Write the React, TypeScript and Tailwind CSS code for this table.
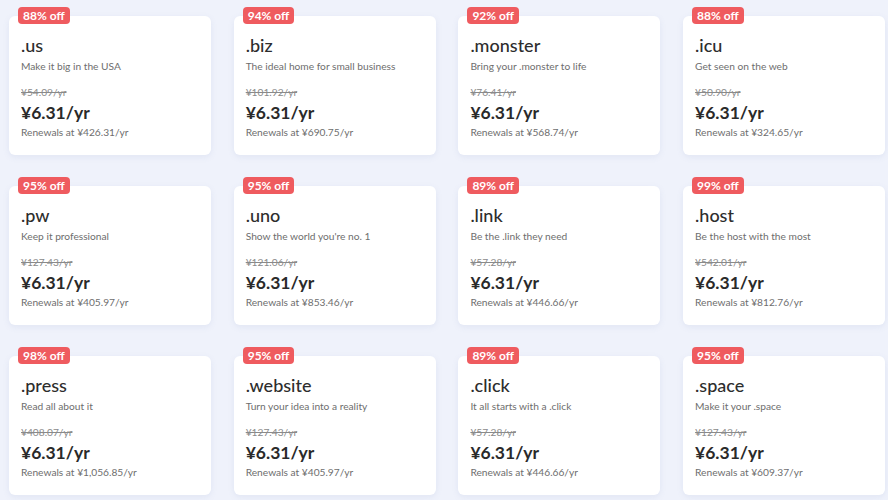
import React from "react";

type Item = { tld: string; desc: string; off: string; old: string; renew: string };

const items: Item[] = [
  { tld: ".us", desc: "Make it big in the USA", off: "88% off", old: "¥54.09/yr", renew: "Renewals at ¥426.31/yr" },
  { tld: ".biz", desc: "The ideal home for small business", off: "94% off", old: "¥101.92/yr", renew: "Renewals at ¥690.75/yr" },
  { tld: ".monster", desc: "Bring your .monster to life", off: "92% off", old: "¥76.41/yr", renew: "Renewals at ¥568.74/yr" },
  { tld: ".icu", desc: "Get seen on the web", off: "88% off", old: "¥50.90/yr", renew: "Renewals at ¥324.65/yr" },
  { tld: ".pw", desc: "Keep it professional", off: "95% off", old: "¥127.43/yr", renew: "Renewals at ¥405.97/yr" },
  { tld: ".uno", desc: "Show the world you're no. 1", off: "95% off", old: "¥121.06/yr", renew: "Renewals at ¥853.46/yr" },
  { tld: ".link", desc: "Be the .link they need", off: "89% off", old: "¥57.28/yr", renew: "Renewals at ¥446.66/yr" },
  { tld: ".host", desc: "Be the host with the most", off: "99% off", old: "¥542.01/yr", renew: "Renewals at ¥812.76/yr" },
  { tld: ".press", desc: "Read all about it", off: "98% off", old: "¥408.07/yr", renew: "Renewals at ¥1,056.85/yr" },
  { tld: ".website", desc: "Turn your idea into a reality", off: "95% off", old: "¥127.43/yr", renew: "Renewals at ¥405.97/yr" },
  { tld: ".click", desc: "It all starts with a .click", off: "89% off", old: "¥57.28/yr", renew: "Renewals at ¥446.66/yr" },
  { tld: ".space", desc: "Make it your .space", off: "95% off", old: "¥127.43/yr", renew: "Renewals at ¥609.37/yr" },
];

function Card({ it }: { it: Item }) {
  return (
    <div className="relative h-[139px] rounded-[6px] bg-white shadow-[0_2px_6px_rgba(120,140,190,0.12)] pl-[12px] pt-[17px]">
      <div className="absolute left-[9px] top-[-9px] h-[17px] px-[5px] rounded-[4px] bg-[#ef5b5f] text-white text-[12px] font-bold leading-[17px]">
        {it.off}
      </div>
      <div className="text-[18px] leading-[24px] font-medium text-[#2d2d2d]">{it.tld}</div>
      <div className="mt-[1px] text-[10.2px] leading-[16px] text-[#6e6e6e]">{it.desc}</div>
      <div className="mt-[10px] text-[10.2px] leading-[16px] text-[#8a8a8a] line-through">{it.old}</div>
      <div className="mt-[3px] text-[17.5px] leading-[20px] font-bold text-[#2a2a2a]">¥6.31/yr</div>
      <div className="mt-[1px] text-[10.2px] leading-[16px] text-[#6e6e6e]">{it.renew}</div>
    </div>
  );
}

export default function App() {
  return (
    <div
      className="w-[888px] h-[500px] overflow-hidden bg-[#eff2fb] pl-[9px] pt-[16px]"
      style={{ fontFamily: "Lato, 'Noto Sans', sans-serif" }}
    >
      <div className="grid grid-cols-[repeat(4,202px)] gap-x-[22.7px] gap-y-[31px]">
        {items.map((it, i) => (
          <Card key={i} it={it} />
        ))}
      </div>
    </div>
  );
}
